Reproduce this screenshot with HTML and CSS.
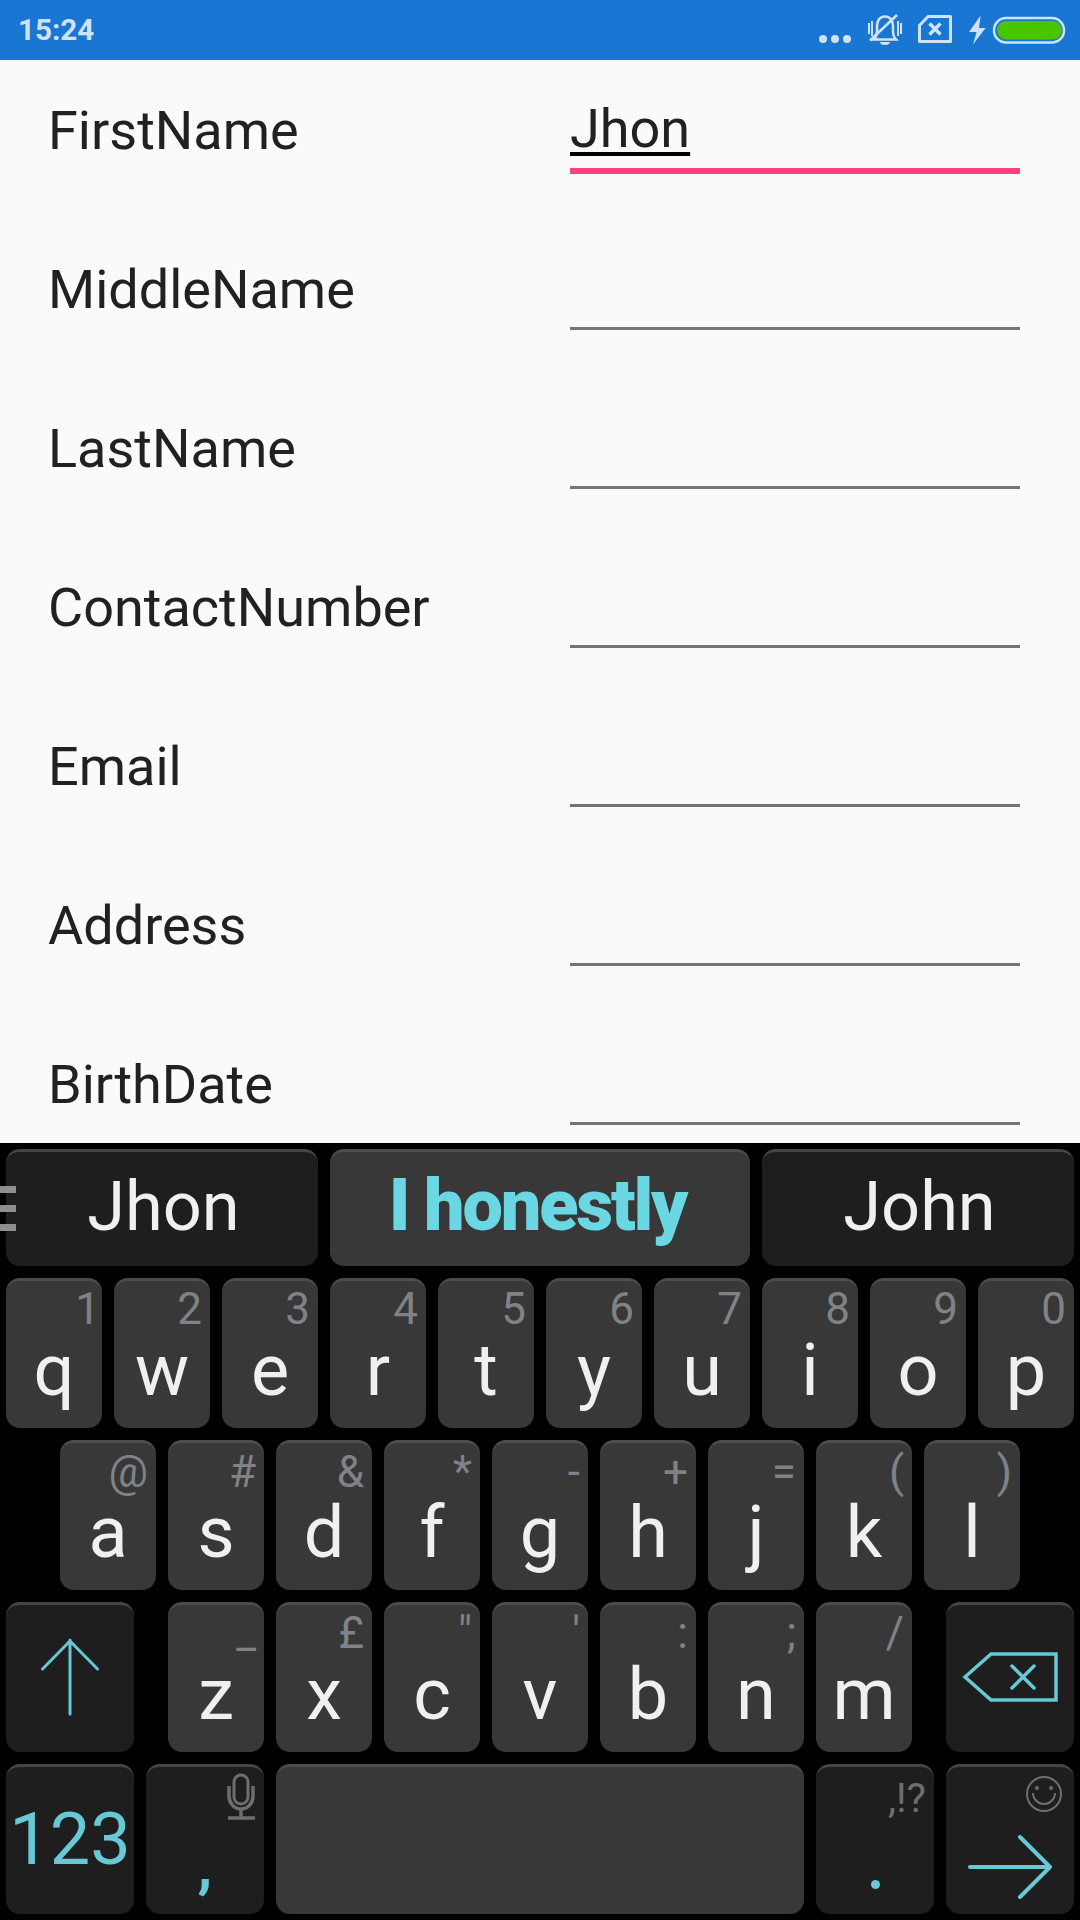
FILE: index.html
```html
<!DOCTYPE html>
<html lang="en">
<head>
  <meta charset="UTF-8" />
  <meta name="viewport" content="width=device-width, initial-scale=1.0"/>
  <title>Contact form</title>
  <link rel="stylesheet" href="styles.css">
</head>
<body>
  <div class="status-bar">
    <span class="time">15:24</span>
    <svg class="status-icons" width="250" height="60" viewBox="816 0 250 60">
      <g fill="#d0e2f7">
        <circle cx="823" cy="39" r="4"/>
        <circle cx="835" cy="39" r="4"/>
        <circle cx="847" cy="39" r="4"/>
        <rect x="868" y="23" width="2" height="11"/>
        <rect x="871" y="21" width="2" height="15"/>
        <rect x="897" y="21" width="2" height="15"/>
        <rect x="900" y="23" width="2" height="11"/>
        <path d="M880 42h10c0 2-2 3-5 3s-5-1-5-3z"/>
        <path d="M980.6 15.5 969 32h7.6L973 44.5 985.6 28H979z"/>
      </g>
      <g fill="none" stroke="#d0e2f7">
        <path stroke-width="2.5" d="M874 39.5h22c-2-2-3-4-3-8v-6c0-5-3-9-8-9s-8 4-8 9v6c0 4-1 6-3 8z"/>
        <path stroke-width="2.5" d="M870 40.500 897 15"/>
        <path stroke-width="3" stroke-linejoin="round" d="M928 16.500h22.500v25h-31v-16z"/>
        <path stroke-width="3.500" d="m929.500 23.500 11 11m0-11-11 11"/>
        <rect stroke-width="2.500" x="994" y="18" width="70" height="24.500" rx="12"/>
      </g>
      <rect x="997" y="21" width="65" height="18.500" rx="9" fill="#4bc400"/>
    </svg>
  </div>

  <div class="form">
    <div class="row">
      <div class="label">FirstName</div>
      <div class="field active"><span class="composing">Jhon</span></div>
    </div>
    <div class="row">
      <div class="label">MiddleName</div>
      <div class="field"></div>
    </div>
    <div class="row">
      <div class="label">LastName</div>
      <div class="field"></div>
    </div>
    <div class="row">
      <div class="label">ContactNumber</div>
      <div class="field"></div>
    </div>
    <div class="row">
      <div class="label">Email</div>
      <div class="field"></div>
    </div>
    <div class="row">
      <div class="label">Address</div>
      <div class="field"></div>
    </div>
    <div class="row">
      <div class="label">BirthDate</div>
      <div class="field"></div>
    </div>
  </div>

  <div class="keyboard">
    <div class="menu-handle"><i></i><i></i><i></i></div>

    <div class="kb-row">
      <div class="suggestion dark">Jhon</div>
      <div class="suggestion best">I honestly</div>
      <div class="suggestion dark">John</div>
    </div>

    <div class="kb-row">
      <div class="key">q<span class="hint one">1</span></div>
      <div class="key">w<span class="hint">2</span></div>
      <div class="key">e<span class="hint">3</span></div>
      <div class="key">r<span class="hint">4</span></div>
      <div class="key">t<span class="hint">5</span></div>
      <div class="key">y<span class="hint">6</span></div>
      <div class="key">u<span class="hint">7</span></div>
      <div class="key">i<span class="hint">8</span></div>
      <div class="key">o<span class="hint">9</span></div>
      <div class="key">p<span class="hint">0</span></div>
    </div>

    <div class="kb-row home-row">
      <div class="key">a<span class="hint">@</span></div>
      <div class="key">s<span class="hint">#</span></div>
      <div class="key">d<span class="hint">&amp;</span></div>
      <div class="key">f<span class="hint">*</span></div>
      <div class="key">g<span class="hint">-</span></div>
      <div class="key">h<span class="hint">+</span></div>
      <div class="key">j<span class="hint">=</span></div>
      <div class="key">k<span class="hint">(</span></div>
      <div class="key">l<span class="hint">)</span></div>
    </div>

    <div class="kb-row">
      <div class="key dark wide shift">
        <svg class="key-icon" width="128" height="150" viewBox="0 0 128 150">
          <path d="M64 112V38M36.500 67 64 39l27.500 28" fill="none" stroke="#67c8d6" stroke-width="3" stroke-linecap="round" stroke-linejoin="round"/>
        </svg>
      </div>
      <div class="key">z<span class="hint">_</span></div>
      <div class="key">x<span class="hint">£</span></div>
      <div class="key">c<span class="hint">"</span></div>
      <div class="key">v<span class="hint">'</span></div>
      <div class="key">b<span class="hint">:</span></div>
      <div class="key">n<span class="hint">;</span></div>
      <div class="key">m<span class="hint">/</span></div>
      <div class="key dark wide backspace">
        <svg class="key-icon" width="128" height="150" viewBox="0 0 128 150">
          <path d="M19 75 45 52h65v46H45z" fill="none" stroke="#67c8d6" stroke-width="3.500"/>
          <path d="m66 64 22 22m0-22L66 86" fill="none" stroke="#67c8d6" stroke-width="3.500" stroke-linecap="round"/>
        </svg>
      </div>
    </div>

    <div class="kb-row">
      <div class="key dark wide numbers">123</div>
      <div class="key dark comma">,
        <svg class="key-icon" width="118" height="150" viewBox="0 0 118 150">
          <g fill="none" stroke="#6e6e6e" stroke-width="3">
            <rect x="88" y="11" width="14" height="29" rx="7"/>
            <path stroke-width="3.500" d="M83 22v10c0 7 5 13 12 13s12-6 12-13V22M95 45v8"/>
            <path stroke-width="3.500" d="M82 54h27"/>
          </g>
        </svg>
      </div>
      <div class="key space"></div>
      <div class="key dark period"><span class="dot"></span><span class="punct">,!?</span></div>
      <div class="key dark wide enter">
        <svg class="key-icon" width="128" height="150" viewBox="0 0 128 150">
          <circle cx="98" cy="30" r="17" fill="none" stroke="#6e6e6e" stroke-width="2"/>
          <path d="M87 29a11 11 0 0 0 22 0" fill="none" stroke="#6e6e6e" stroke-width="2"/>
          <circle cx="91" cy="24" r="2" fill="#6e6e6e"/>
          <circle cx="105" cy="24" r="2" fill="#6e6e6e"/>
          <path d="M24 103h80M74 73l30 30-30 30" fill="none" stroke="#67c8d6" stroke-width="4" stroke-linecap="round" stroke-linejoin="round"/>
        </svg>
      </div>
    </div>
  </div>
</body>
</html>
```

FILE: styles.css
```css
* {
  box-sizing: border-box;
}
body {
  font-family: Roboto, "Noto Sans", sans-serif;
  background: #000;
  width: 1080px;
  height: 1920px;
  margin: 0;
  overflow: hidden;
  display: flex;
  flex-direction: column;
}

/* status bar */
.status-bar {
  height: 60px;
  flex-shrink: 0;
  background: #1976d2;
  display: flex;
  align-items: center;
  justify-content: space-between;
  padding: 0 14px 0 18px;
}
.time {
  font-size: 29.6px;
  font-weight: 700;
  color: #d0e2f7;
}
.status-icons {
  display: block;
}

/* form */
.form {
  height: 1083px;
  flex-shrink: 0;
  background: #fafafa;
  color: #212121;
  padding-left: 48px;
  overflow: hidden;
}
.row {
  height: 159px;
  display: flex;
  align-items: flex-end;
}
.row:first-child {
  height: 111px;
}
.label {
  width: 522px;
  font-size: 54px;
  line-height: 63px;
  padding-bottom: 9px;
  box-sizing: content-box;
}
.field {
  width: 450px;
  height: 76px;
  font-size: 54px;
  line-height: 63px;
  border-bottom: 3px solid #757575;
}
.field.active {
  height: 79px;
  margin-bottom: -3px;
  padding-top: 2px;
  border-bottom: 6px solid #ff4081;
}
.composing {
  text-decoration: underline #000 4px;
  text-underline-offset: 5px;
}

/* keyboard */
.keyboard {
  position: relative;
  flex: 1;
  background: #000;
  padding: 6px;
  display: flex;
  flex-direction: column;
  gap: 12px;
}
.kb-row {
  display: flex;
  gap: 12px;
}
.home-row {
  padding-left: 54px;
}
.key {
  position: relative;
  width: 96px;
  height: 150px;
  padding-top: 50px;
  border-radius: 14px;
  border-top: 3px solid #4d4d4d;
  background: #383838;
  color: #f0f0f0;
  font-size: 72px;
  line-height: 80px;
  text-align: center;
}
.key.dark {
  background: #1e1e1e;
  border-top-color: #454545;
}
.key.wide {
  width: 128px;
}
.shift {
  margin-right: 22px;
}
.backspace {
  margin-left: 22px;
}
.key.comma {
  width: 118px;
  padding-top: 53px;
  color: #67c8d6;
  font-size: 60px;
  font-weight: 700;
  line-height: 92px;
}
.space {
  width: 528px;
}
.period {
  width: 118px;
}
.key.numbers {
  padding-top: 31px;
  color: #67c8d6;
  font-size: 72px;
  line-height: 84px;
}
.hint {
  position: absolute;
  top: 6px;
  right: 8px;
  font-size: 44px;
  line-height: 44px;
  color: #7f8386;
}
.hint.one {
  right: 2px;
}
.home-row .hint {
  top: 7px;
  right: 8px;
}
.key-icon {
  position: absolute;
  top: -3px;
  left: 0;
}
.dot {
  position: absolute;
  left: 55px;
  top: 113px;
  width: 9px;
  height: 9px;
  border-radius: 50%;
  background: #67c8d6;
}
.punct {
  position: absolute;
  top: 9px;
  right: 8px;
  font-size: 41px;
  line-height: 44px;
  color: #6e6e6e;
}
.suggestion {
  height: 117px;
  padding-top: 9px;
  border-radius: 14px;
  border-top: 3px solid #4d4d4d;
  background: #383838;
  font-size: 68.5px;
  line-height: 92px;
  text-align: center;
}
.suggestion.dark {
  width: 312px;
  padding-left: 3px;
  background: #1e1e1e;
  border-top-color: #454545;
  color: #f0f0f0;
}
.suggestion.best {
  flex: 1;
  padding-top: 8px;
  padding-right: 5px;
  color: #6bd7e3;
  font-size: 72px;
  font-weight: 900;
  letter-spacing: -2.2px;
}
.menu-handle {
  position: absolute;
  top: 43px;
  left: 0;
  width: 16px;
  display: flex;
  flex-direction: column;
  gap: 12px;
}
.menu-handle i {
  display: block;
  height: 7px;
  background: #8e8e8e;
}
```
